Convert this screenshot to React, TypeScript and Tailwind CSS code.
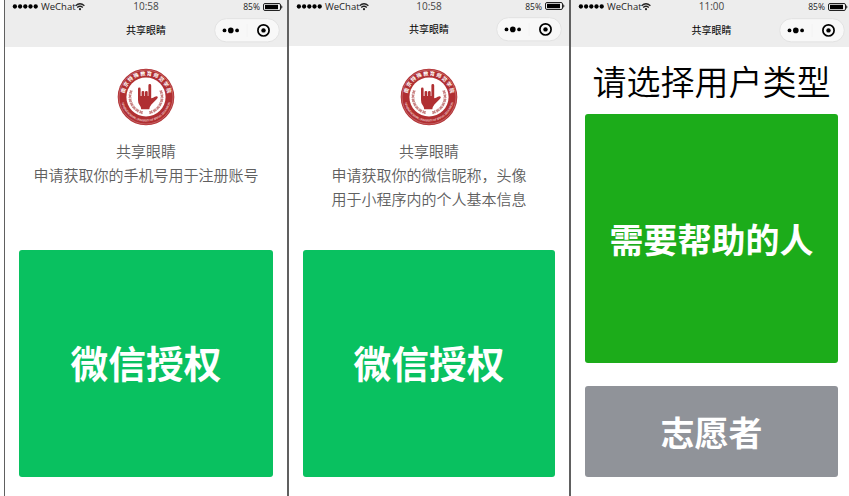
import type { ReactNode } from "react";

const cjk = "font-['Noto_Sans_CJK_SC',sans-serif]";
const latin = "font-['Open_Sans',sans-serif]";

function Wifi() {
  return (
    <svg width="10" height="9" viewBox="0 0 10 9" fill="none" stroke="#222" strokeWidth="1.3" className="shrink-0">
      <path d="M0.6 3.7Q5 -0.3 9.4 3.7" />
      <path d="M2.2 5.5Q5 3 7.8 5.5" />
      <circle cx="5" cy="7.2" r="1.1" fill="#222" stroke="none" />
    </svg>
  );
}

function Battery() {
  return (
    <svg width="20" height="8" viewBox="0 0 20 8" className="shrink-0">
      <rect x="0.5" y="0.5" width="17" height="7" rx="1.5" fill="none" stroke="#222" />
      <rect x="2" y="1.8" width="13" height="4.4" fill="#000" />
      <path d="M18.3 2.5h0.6q1 1.5 0 3h-0.6z" fill="#000" />
    </svg>
  );
}

function Header({ time, className, row }: { time: string; className: string; row: string }) {
  return (
    <header className={`shrink-0 bg-[#ededed] ${className}`}>
      <div className={`flex items-center pl-[7px] pr-1 text-[#222] ${row} ${latin}`}>
        <div className="flex flex-1 items-center">
          <svg width="27" height="5" viewBox="0 0 27 5">
            {[2.9, 8.1, 13.3, 18.5, 23.7].map((x) => (
              <circle key={x} cx={x} cy="2.5" r="2.15" fill="#000" />
            ))}
          </svg>
          <span className="ml-[2px] w-[34px] text-[9.5px] leading-[13px] whitespace-nowrap">WeChat</span>
          <Wifi />
        </div>
        <span className="mr-[3px] text-[10px] leading-[13px] text-[#444]">{time}</span>
        <div className="flex flex-1 items-center justify-end gap-[3px]">
          <span className="text-[8.5px] leading-[13px]">85%</span>
          <Battery />
        </div>
      </div>
      <div className="flex h-[34px] items-center pl-[7px]">
        <span className="flex-1" />
        <h1 className={`text-[10px] leading-[14px] text-black ${cjk}`}>共享眼睛</h1>
        <div className="flex flex-1 justify-end pr-[7px]">
          <svg width="66" height="25" viewBox="0 0 66 25">
            <rect x="0.7" y="0.7" width="64.6" height="23.2" rx="11.6" fill="#f8f8f8" stroke="#e2e2e2" />
            <path d="M33 6v13" stroke="#f1f1f1" strokeWidth="0.8" />
            <circle cx="10.5" cy="12.4" r="1.9" />
            <circle cx="16.8" cy="12.4" r="2.8" />
            <circle cx="23.1" cy="12.4" r="1.9" />
            <circle cx="49.5" cy="12.4" r="5.6" fill="none" stroke="#000" strokeWidth="1.7" />
            <circle cx="49.5" cy="12.4" r="2.2" />
          </svg>
        </div>
      </div>
    </header>
  );
}

function Wreath() {
  return (
    <g fill="#c98384">
      <path d="M26 45.4A16.4 16.4 0 0 1 14.2 22.4" fill="none" stroke="#c98384" strokeWidth="0.5" />
      {[0, 1, 2, 3, 4, 5, 6].map((i) => {
        const deg = 108 + i * 15;
        const a = (deg * Math.PI) / 180;
        const x = 29 + Math.cos(a) * 16;
        const y = 29 + Math.sin(a) * 16;
        return (
          <g key={i}>
            <ellipse cx={x} cy={y} rx="0.8" ry="2.2" transform={`rotate(${deg + 38} ${x} ${y})`} />
            <ellipse cx={x} cy={y} rx="0.8" ry="2.2" transform={`rotate(${deg - 38} ${x} ${y})`} />
          </g>
        );
      })}
    </g>
  );
}

function Emblem({ id }: { id: string }) {
  return (
    <svg width="58" height="58" viewBox="0 0 58 58" className="shrink-0">
      <defs>
        <path id={`${id}-top`} d="M8.6 36.4A21.7 21.7 0 1 1 49.4 36.4" />
        <path id={`${id}-bottom`} d="M4.7 34.5A25 25 0 0 0 53.3 34.5" />
      </defs>
      <circle cx="29" cy="29" r="28.3" fill="#b02f32" />
      <circle cx="29" cy="29" r="27" fill="none" stroke="#d99293" strokeWidth="0.5" />
      <circle cx="29" cy="29" r="19.6" fill="#fff" />
      <Wreath />
      <g transform="matrix(-1 0 0 1 58 0)">
        <Wreath />
      </g>
      <path
        d="M21 20.9Q21 19.6 22.3 19.6Q23.6 19.6 23.6 20.9V28H31.4V17.4Q31.4 16 32.8 16Q34.2 16 34.2 17.4V30.2Q36.2 30.2 37.8 28.8Q40 27.6 40.8 29Q41 30 39.6 31.2L34.4 36.6Q32.6 38.8 32.3 41.2H24.2Q24 38.8 22.4 36.8Q21 35 21 32Z"
        fill="#b02f32"
      />
      <rect x="24.6" y="22.9" width="2.7" height="6.4" rx="1.2" fill="#b02f32" />
      <rect x="28" y="22.9" width="2.7" height="6.4" rx="1.2" fill="#b02f32" />
      <text fill="#fff" fontSize="5.2" fontWeight="700" className={cjk}>
        <textPath href={`#${id}-top`} startOffset="50%" textAnchor="middle" textLength="61">
          南京特殊教育师范学院
        </textPath>
      </text>
      <text fill="#f3d6d6" fontSize="2.9" fontWeight="600" className={latin}>
        <textPath href={`#${id}-bottom`} startOffset="50%" textAnchor="middle" textLength="66">
          NANJING NORMAL UNIVERSITY OF SPECIAL EDUCATION
        </textPath>
      </text>
    </svg>
  );
}

function AuthScreen({ id, header, row, top, lines }: { id: string; header: string; row: string; top: string; lines: string[] }) {
  return (
    <>
      <Header time="10:58" className={header} row={row} />
      <main className={`flex flex-1 flex-col items-center px-[14px] pb-[19px] ${cjk}`}>
        <div className={`flex w-full flex-1 flex-col items-center ${top}`}>
          <Emblem id={id} />
          <div className="mt-[13px] text-center text-[15px] leading-6 font-[350] whitespace-nowrap text-[#606060]">
            <p>共享眼睛</p>
            {lines.map((l) => (
              <p key={l}>{l}</p>
            ))}
          </div>
        </div>
        <button className="h-[227px] w-full shrink-0 rounded-[3px] bg-[#09c160] pb-[3px] text-[37.7px] leading-[50px] font-bold text-white">
          微信授权
        </button>
      </main>
    </>
  );
}

function Screen({ className, children }: { className: string; children: ReactNode }) {
  return <section className={`flex h-full shrink-0 flex-col border-[#606060] ${className}`}>{children}</section>;
}

export default function App() {
  return (
    <div className="flex h-[496px] w-[849px] overflow-hidden bg-white pl-1">
      <Screen className="w-[283px] border-l">
        <AuthScreen id="phone" header="h-[47px]" row="h-[13px]" top="pt-[21px]" lines={["申请获取你的手机号用于注册账号"]} />
      </Screen>
      <Screen className="w-[282px] border-l-2">
        <AuthScreen
          id="profile"
          header="h-[46px]"
          row="h-[12px]"
          top="pt-[22px]"
          lines={["申请获取你的微信昵称，头像", "用于小程序内的个人基本信息"]}
        />
      </Screen>
      <Screen className="w-[283px] border-l-2">
        <Header time="11:00" className="h-[47px]" row="h-[13px]" />
        <main className={`flex flex-1 flex-col px-[14px] pb-[19px] ${cjk}`}>
          <h2 className="flex flex-1 items-center justify-center pt-px text-[34px] leading-[50px] font-[350] whitespace-nowrap text-black">
            请选择用户类型
          </h2>
          <button className="h-[249px] shrink-0 rounded-[3px] bg-[#1cac1a] text-[34px] leading-[50px] font-bold text-white">
            需要帮助的人
          </button>
          <button className="mt-[23px] h-[91px] shrink-0 rounded-[3px] bg-[#909399] text-[34px] leading-[50px] font-bold text-white">
            志愿者
          </button>
        </main>
      </Screen>
    </div>
  );
}
